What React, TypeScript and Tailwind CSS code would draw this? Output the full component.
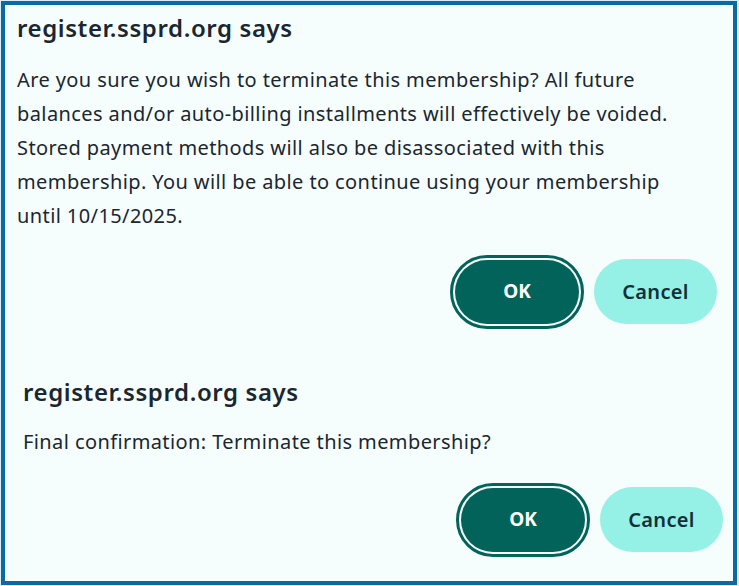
import React from "react";

function Buttons({ className }: { className: string }) {
  return (
    <div className={"flex justify-end items-center gap-[15px] " + className}>
      <button className="w-[124px] h-[64px] rounded-full bg-[#02635a] text-white text-[19px] font-bold outline-[3px] outline-solid outline-[#02635a] outline-offset-[2px]">
        OK
      </button>
      <button className="w-[123px] h-[65px] rounded-full bg-[#95f1e5] text-[#12303a] text-[20px] font-semibold tracking-[0.3px]">
        Cancel
      </button>
    </div>
  );
}

export default function App() {
  return (
    <div className="w-[739px] h-[586px] bg-[#d9eef8] pt-px pl-px">
      <div
        className="w-[736px] h-[584px] border-4 border-[#0b6aa4] bg-[#f6fefd] flex flex-col text-[#1a2630]"
        style={{ fontFamily: '"Noto Sans", "Open Sans", sans-serif' }}
      >
        <section className="pl-[12px] pr-[16px] pt-[7px]">
          <h1 className="text-[24px] leading-[31px] font-semibold tracking-[0.6px]">register.ssprd.org says</h1>
          <p className="mt-[20px] text-[20px] leading-[34px] tracking-[0.4px] w-[690px]">
            Are you sure you wish to terminate this membership? All future balances and/or auto-billing
            installments will effectively be voided. Stored payment methods will also be disassociated with
            this membership. You will be able to continue using your membership until 10/15/2025.
          </p>
          <Buttons className="mt-[26px]" />
        </section>
        <section className="pl-[18px] pr-[10px] mt-[52px]">
          <h1 className="text-[24px] leading-[31px] font-semibold tracking-[0.6px]">register.ssprd.org says</h1>
          <p className="mt-[18px] text-[20px] leading-[34px] tracking-[0.4px]">
            Final confirmation: Terminate this membership?
          </p>
          <Buttons className="mt-[28px]" />
        </section>
      </div>
    </div>
  );
}
